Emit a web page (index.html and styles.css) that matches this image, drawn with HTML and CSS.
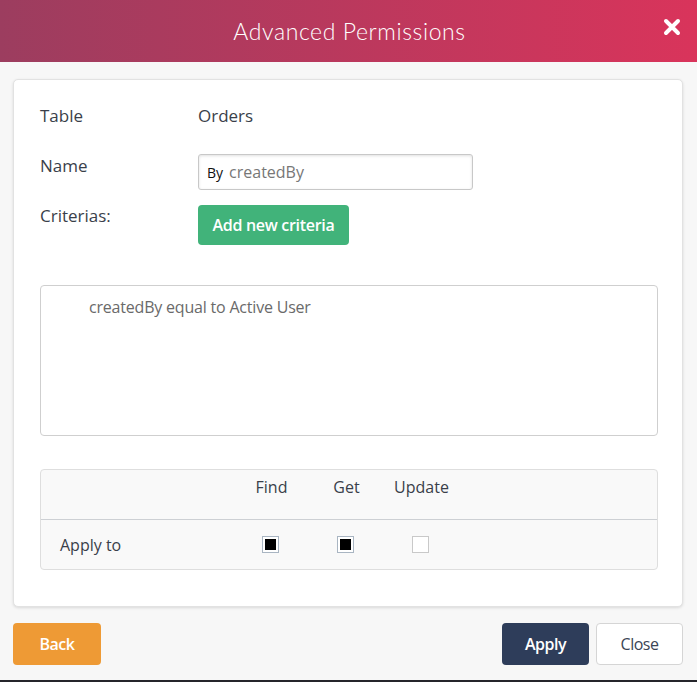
FILE: index.html
```html
<!DOCTYPE html>
<html>
<head>
<meta charset="utf-8">
<link rel="stylesheet" href="styles.css">
</head>
<body>
<div class="modal">
  <div class="header">
    <div class="title">Advanced Permissions</div>
    <div class="close-x">
      <svg width="18" height="18" viewBox="0 0 18 18"><path d="M3 3 L15 15 M15 3 L3 15" stroke="#fff" stroke-width="4" stroke-linecap="round"/></svg>
    </div>
  </div>
  <div class="content">
    <div class="card">
      <div class="row row-table">
        <div class="label">Table</div>
        <div class="value">Orders</div>
      </div>
      <div class="row row-name">
        <div class="label">Name</div>
        <div class="input"><span class="prefix">By</span><span class="input-text">createdBy</span></div>
      </div>
      <div class="row row-crit">
        <div class="label">Criterias:</div>
        <button class="btn btn-green">Add new criteria</button>
      </div>
      <div class="criteria-box">
        <div class="criteria-item">createdBy equal to Active User</div>
      </div>
      <div class="perm">
        <div class="perm-head">
          <div class="c-label"></div>
          <div class="c-col">Find</div>
          <div class="c-col">Get</div>
          <div class="c-col">Update</div>
        </div>
        <div class="perm-row">
          <div class="c-label">Apply to</div>
          <div class="c-col"><span class="cb checked"></span></div>
          <div class="c-col"><span class="cb checked"></span></div>
          <div class="c-col"><span class="cb"></span></div>
        </div>
      </div>
    </div>
  </div>
  <div class="footer">
    <button class="btn btn-back">Back</button>
    <div class="spacer"></div>
    <button class="btn btn-apply">Apply</button>
    <button class="btn btn-close">Close</button>
  </div>
  <div class="bottom-line"></div>
</div>
</body>
</html>
```
FILE: styles.css
```css
* { box-sizing: border-box; }
html, body { margin: 0; padding: 0; }
body {
  width: 697px;
  height: 682px;
  background: #f7f7f7;
  font-family: "Open Sans", "Noto Sans", sans-serif;
  overflow: hidden;
}
.modal {
  display: flex;
  flex-direction: column;
  height: 682px;
}
.header {
  position: relative;
  height: 62px;
  background: linear-gradient(to right, #9c3d5f, #d9345b);
  display: flex;
  align-items: center;
  justify-content: center;
}
.title {
  color: #fff;
  font-family: "Lato", sans-serif;
  font-size: 23px;
  font-weight: 300;
  letter-spacing: 0.6px;
  padding-left: 2px;
}
.close-x {
  position: absolute;
  right: 16px;
  top: 18px;
  width: 18px;
  height: 18px;
  display: flex;
}
.content {
  padding: 17px 14px 0 13px;
}
.card {
  background: #fff;
  border: 1px solid #e2e2e2;
  border-radius: 5px;
  box-shadow: 0 1px 3px rgba(0,0,0,0.12);
  height: 528px;
  padding: 25px 24px 0 26px;
}
.row {
  display: flex;
  align-items: flex-start;
}
.label {
  width: 158px;
  font-size: 17px;
  line-height: 22px;
  color: #3a3f4a;
}
.value {
  font-size: 17px;
  line-height: 22px;
  color: #3a3f4a;
}
.row-name { margin-top: 27px; }
.row-name .label { padding-top: 1px; }
.input {
  width: 275px;
  height: 36px;
  border: 1px solid #c8c8c8;
  border-radius: 3px;
  box-shadow: inset 0 1px 3px rgba(0,0,0,0.12);
  display: flex;
  align-items: center;
  padding-left: 8px;
}
.prefix {
  font-size: 14px;
  color: #111;
  margin-right: 6px;
}
.input-text {
  font-size: 16px;
  color: #777;
}
.row-crit { margin-top: 15px; }
.btn {
  font-family: "Open Sans", sans-serif;
  border: none;
  border-radius: 4px;
  cursor: pointer;
}
.btn-green {
  background: #41b37a;
  color: #fff;
  font-size: 16px;
  font-weight: 600;
  height: 40px;
  width: 151px;
  padding: 0;
  letter-spacing: -0.3px;
}
.criteria-box {
  margin-top: 40px;
  height: 151px;
  border: 1px solid #cfcfcf;
  border-radius: 4px;
  padding: 10px 0 0 48px;
}
.criteria-item {
  font-size: 16px;
  line-height: 22px;
  color: #6a6a6a;
  letter-spacing: -0.2px;
}
.perm {
  margin-top: 33px;
  height: 101px;
  border: 1px solid #dedede;
  border-radius: 4px;
  background: #f9f9f9;
}
.perm-head {
  display: flex;
  height: 50px;
  border-bottom: 1px solid #cdd0d4;
  padding-top: 6px;
}
.perm-row {
  display: flex;
  align-items: center;
  height: 49px;
}
.c-label {
  width: 193px;
  padding-left: 19px;
  font-size: 16px;
  color: #3a3f4a;
}
.c-col {
  width: 75px;
  text-align: center;
  font-size: 16px;
  line-height: 22px;
  color: #3a3f4a;
  display: flex;
  justify-content: center;
}
.perm-row .c-col { padding-right: 3px; }
.cb {
  display: block;
  width: 17px;
  height: 17px;
  border: 1px solid #c9c9c9;
  background: #fff;
}
.cb.checked {
  border: 1px solid #a9b5c2;
  padding: 2px;
}
.cb.checked::after {
  content: "";
  display: block;
  width: 11px;
  height: 11px;
  background: #000;
}
.footer {
  display: flex;
  padding: 16px 14px 0 13px;
  gap: 7px;
}
.spacer { flex: 1; }
.btn-back, .btn-apply, .btn-close {
  height: 42px;
  font-size: 16px;
  font-weight: 600;
  padding: 0;
  letter-spacing: -0.5px;
}
.btn-back {
  width: 88px;
  background: #ee9a35;
  color: #fff;
}
.btn-apply {
  width: 87px;
  background: #2e3d5a;
  color: #fff;
}
.btn-close {
  width: 87px;
  background: #fff;
  color: #3a4555;
  border: 1px solid #d5d5d5;
  font-weight: 400;
}
.bottom-line {
  margin-top: auto;
  height: 2px;
  background: #25252b;
}
```
